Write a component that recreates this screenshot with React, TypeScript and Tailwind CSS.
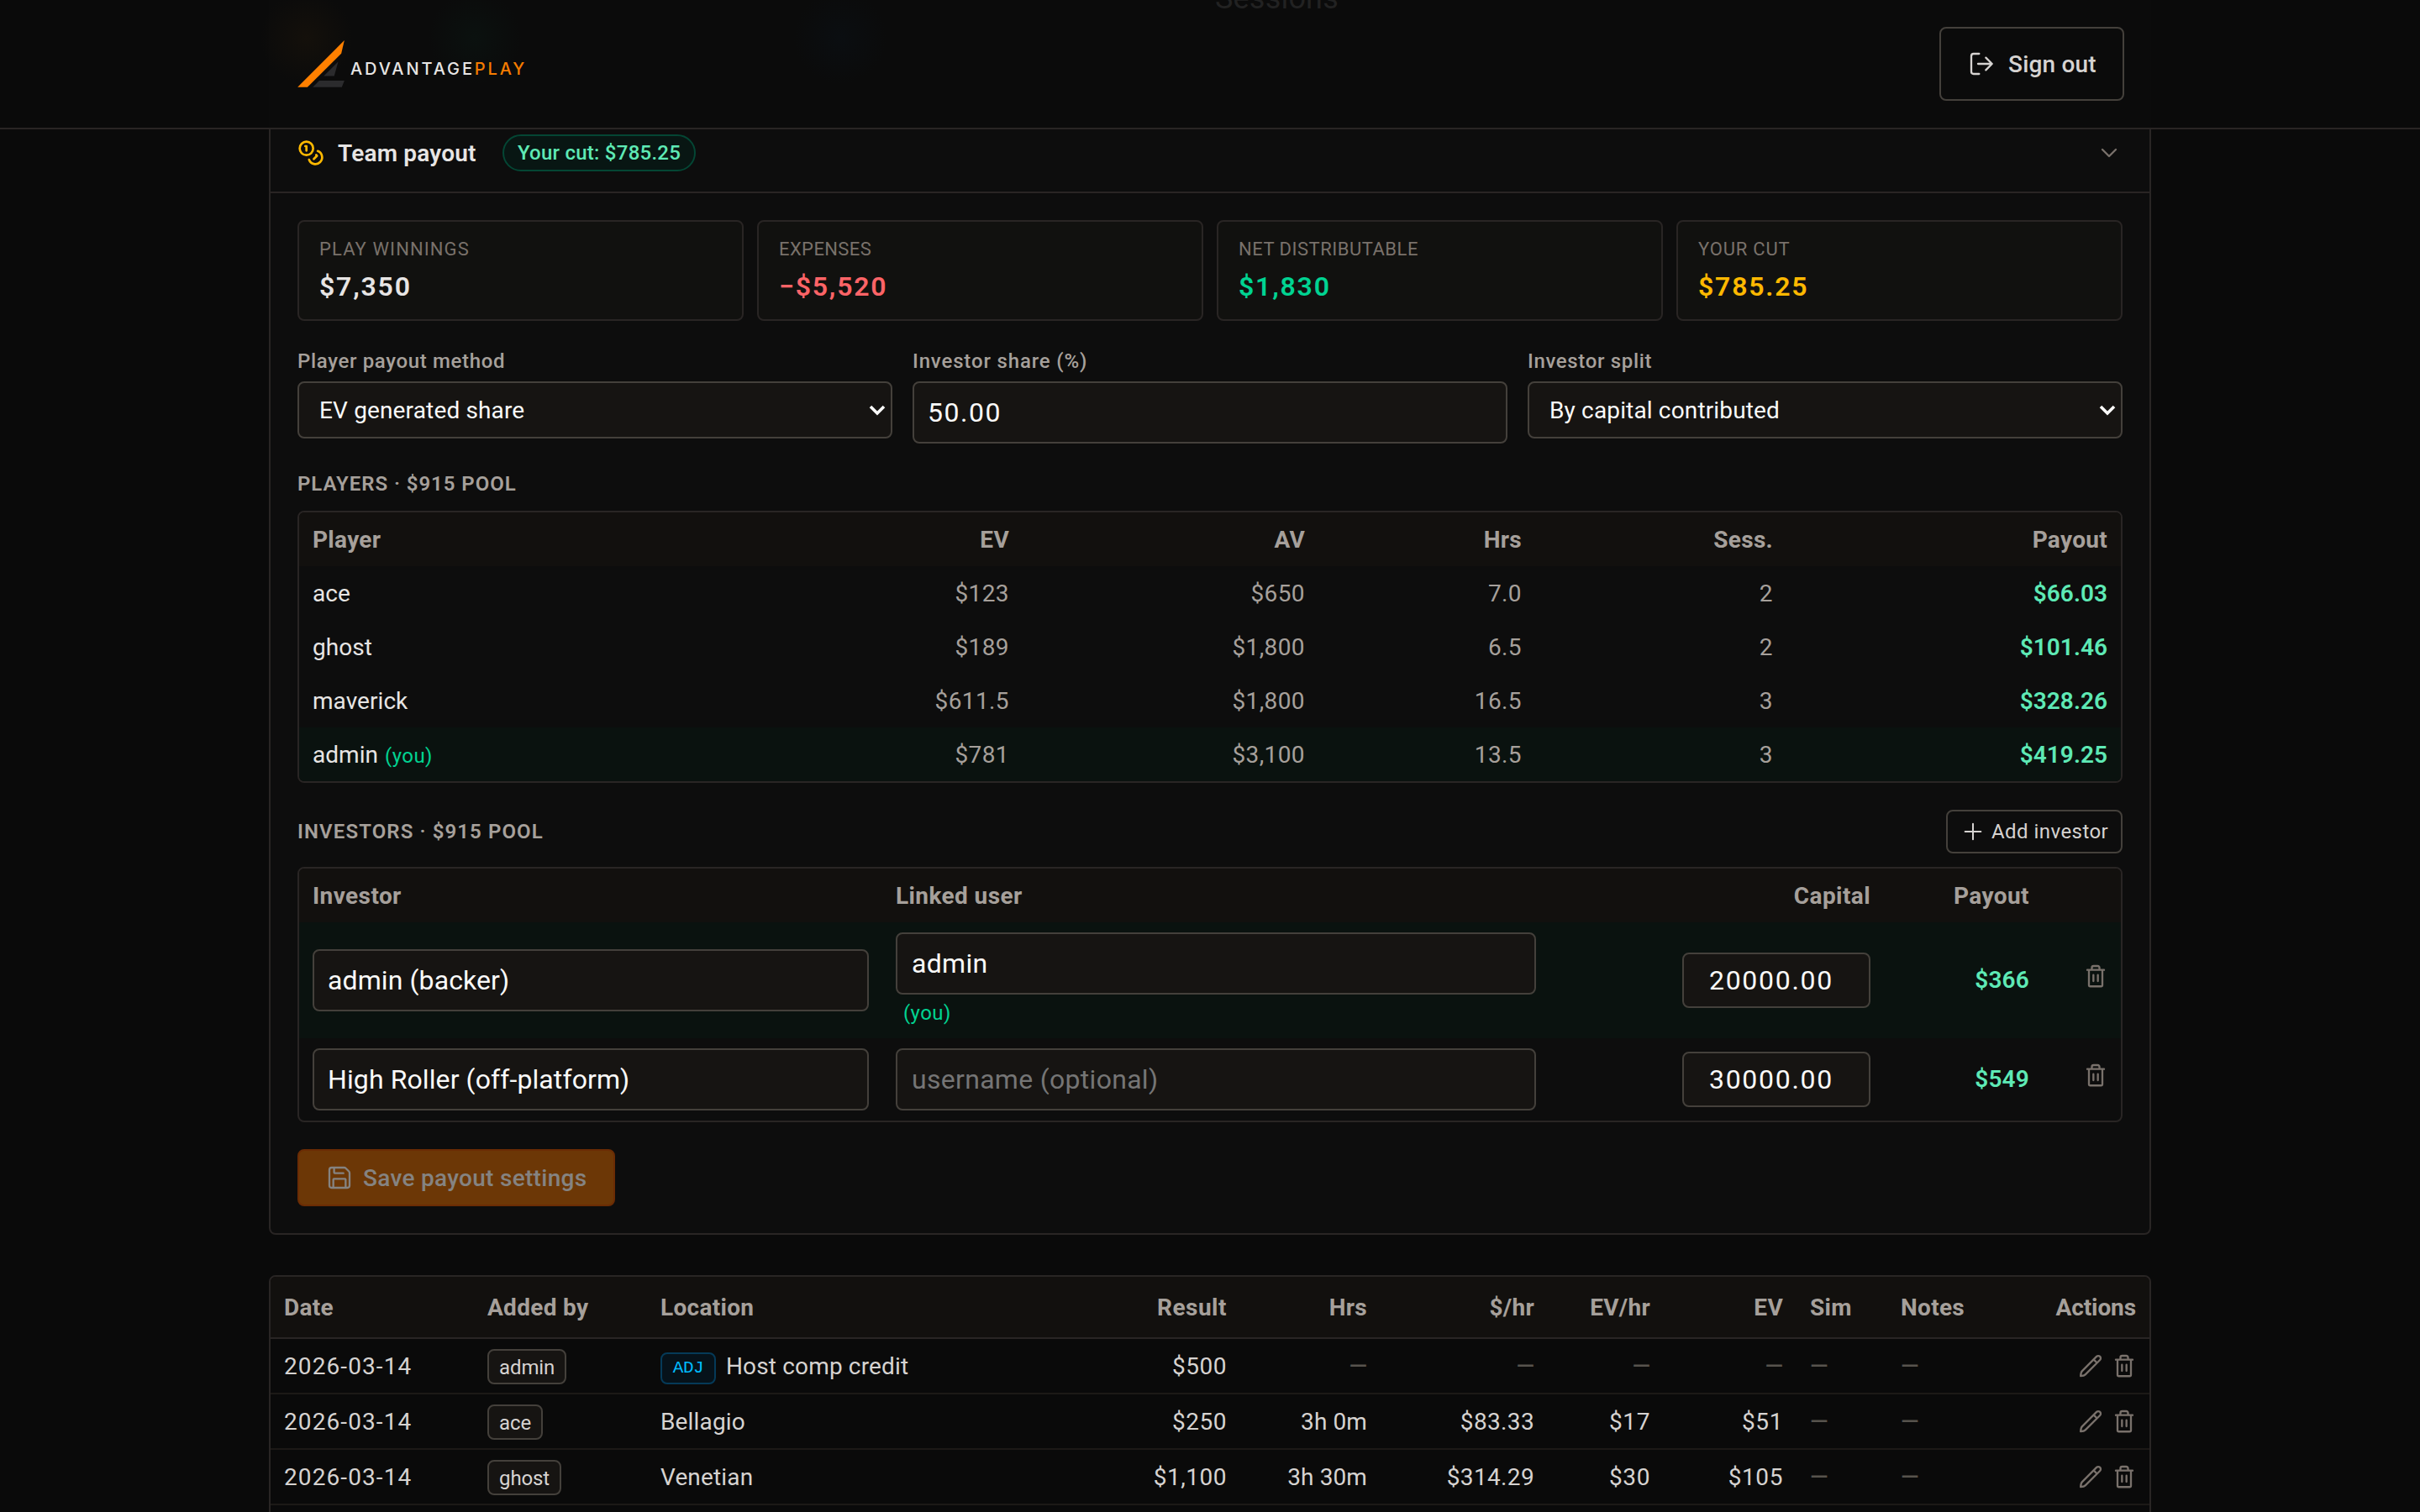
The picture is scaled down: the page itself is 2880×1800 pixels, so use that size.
import React from 'react';

interface IconProps {
  className?: string;
  children: React.ReactNode;
}

const Icon: React.FC<IconProps> = ({ className, children }) => (
  <svg
    viewBox="0 0 24 24"
    fill="none"
    stroke="currentColor"
    strokeWidth={1.75}
    strokeLinecap="round"
    strokeLinejoin="round"
    className={`size-8 shrink-0 ${className ?? ''}`}
  >
    {children}
  </svg>
);

const TrashIcon: React.FC<{ className?: string }> = ({ className }) => (
  <Icon className={className}>
    <path d="M4.500 6.500h15M6 6.500V20a1.200 1.200 0 0 0 1.200 1.200h9.600A1.200 1.200 0 0 0 18 20V6.500M8.600 6.300V4.600A1.600 1.600 0 0 1 10.200 3h3.600a1.600 1.600 0 0 1 1.600 1.600v1.700M10 11v5.500M14 11v5.500" />
  </Icon>
);

const PencilIcon: React.FC = () => (
  <Icon>
    <path d="M17.300 3.700a2.150 2.150 0 0 1 3.050 3.050L7.300 19.800c-.8.8-2.700 1.200-4.200 1.300.1-1.500.4-3.500 1.200-4.300L17.300 3.700zM14.700 6.300l3.050 3.050" />
  </Icon>
);

const stats = [
  { label: 'Play winnings', labelClass: 'tracking-[1.1px]', value: '$7,350', color: 'text-stone-200' },
  { label: 'Expenses', labelClass: 'tracking-[0.4px]', value: '−$5,520', color: 'text-red-400' },
  { label: 'Net distributable', labelClass: 'tracking-[0.5px]', value: '$1,830', color: 'text-emerald-400' },
  { label: 'Your cut', labelClass: 'tracking-[0.8px]', value: '$785.25', color: 'text-amber-400' },
];

const players = [
  { name: 'ace', ev: '$123', av: '$650', hrs: '7.0', sess: '2', payout: '$66.03', you: false },
  { name: 'ghost', ev: '$189', av: '$1,800', hrs: '6.5', sess: '2', payout: '$101.46', you: false },
  { name: 'maverick', ev: '$611.5', av: '$1,800', hrs: '16.5', sess: '3', payout: '$328.26', you: false },
  { name: 'admin', ev: '$781', av: '$3,100', hrs: '13.5', sess: '3', payout: '$419.25', you: true },
];

const investors = [
  { name: 'admin (backer)', user: 'admin', capital: '20000.00', payout: '$366', you: true },
  { name: 'High Roller (off-platform)', user: '', capital: '30000.00', payout: '$549', you: false },
];

const sessions = [
  { by: 'admin', location: 'Host comp credit', adj: true, result: '$500', hrs: '', perHr: '', evHr: '', ev: '' },
  { by: 'ace', location: 'Bellagio', adj: false, result: '$250', hrs: '3h 0m', perHr: '$83.33', evHr: '$17', ev: '$51' },
  { by: 'ghost', location: 'Venetian', adj: false, result: '$1,100', hrs: '3h 30m', perHr: '$314.29', evHr: '$30', ev: '$105' },
];

const fieldClass =
  'block w-full rounded-[8px] border-2 border-stone-700 bg-[#161412] text-stone-50 outline-none placeholder:text-[#757575]';

const Header: React.FC = () => (
  <header className="relative h-[154px] shrink-0 overflow-hidden border-b-2 border-stone-800 bg-[#0a0a0a]">
    <div className="absolute left-[320px] top-0 h-full w-[2240px] bg-[#0b0b0b]" />
    <div className="absolute left-[300px] top-[-20px] size-[130px] bg-[radial-gradient(circle,#14100b_0%,transparent_60%)]" />
    <div className="absolute left-[500px] top-[-20px] size-[130px] bg-[radial-gradient(circle,#0b110f_0%,transparent_60%)]" />
    <div className="absolute left-[935px] top-[-20px] size-[130px] bg-[radial-gradient(circle,#0b0e11_0%,transparent_60%)]" />
    <div className="absolute left-[1446px] top-[-27px] text-[36px] leading-[50px] tracking-[0.2px] text-[#222222]">
      Sessions
    </div>
    <div className="relative mx-auto flex h-[152px] w-[2176px] items-center justify-between">
      <div className="flex items-end gap-[7px] pl-[2px]">
        <svg viewBox="43 55 166 167" className="h-[56px] w-[56px]">
          <path d="M43 221 209 55 198 102 78 221z" fill="#ff8000" />
          <path d="M187 131 173 182H136zM120 198h89l-9 23H97z" fill="#2b2b2d" />
        </svg>
        <div className="mb-[10px] font-['Inter',sans-serif] text-[20px] font-medium leading-6 tracking-[2.9px] text-stone-200">
          ADVANTAGE<span className="text-[#f57c00]">PLAY</span>
        </div>
      </div>
      <button className="flex h-[88px] w-[220px] items-center gap-4 rounded-[8px] border-2 border-stone-700 px-8 text-[28px] font-medium tracking-[0.2px] text-stone-300">
        <Icon>
          <path d="M10 3H5a2 2 0 0 0-2 2v14a2 2 0 0 0 2 2h5M9 12h12.500M16 6.500l5.500 5.500-5.500 5.500" />
        </Icon>
        <span className="whitespace-nowrap pt-[2px]">Sign out</span>
      </button>
    </div>
  </header>
);

const Select: React.FC<{ value: string }> = ({ value }) => (
  <div className="flex h-[68px] items-center justify-between rounded-[8px] border-2 border-stone-700 bg-[#161412] pl-6 pr-[6px] text-[28px] tracking-[0.15px] text-stone-50">
    <span className="pt-[2px]">{value}</span>
    <svg viewBox="0 0 20 14" className="h-[14px] w-5" fill="none" stroke="currentColor" strokeWidth={3.6}>
      <path d="M2 3l8 8 8-8" />
    </svg>
  </div>
);

const Settings: React.FC = () => (
  <div className="mt-8 grid grid-cols-3 gap-6">
    <div>
      <label className="mb-2 block text-[24px] font-medium leading-8 tracking-[0.65px] text-stone-400">Player payout method</label>
      <Select value="EV generated share" />
    </div>
    <div>
      <label className="mb-2 block text-[24px] font-medium leading-8 tracking-[0.85px] text-stone-400">Investor share (%)</label>
      <input className={`${fieldClass} h-[74px] px-4 text-[32px] tracking-[1.5px]`} defaultValue="50.00" />
    </div>
    <div>
      <label className="mb-2 block text-[24px] font-medium leading-8 tracking-[0.65px] text-stone-400">Investor split</label>
      <Select value="By capital contributed" />
    </div>
  </div>
);

const PlayersTable: React.FC = () => (
  <div className="mt-4 overflow-hidden rounded-[8px] border-2 border-stone-800">
    <table className="w-full table-fixed text-[28px] leading-9 [&_td]:h-16 [&_td]:px-4 [&_td]:pb-0 [&_td]:pt-[2px] [&_th]:h-16 [&_th]:px-4 [&_th]:pb-0 [&_th]:pt-[2px]">
      <colgroup>
        <col className="w-[645px]" />
        <col className="w-[216px]" />
        <col className="w-[352px]" />
        <col className="w-[258px]" />
        <col className="w-[299px]" />
        <col className="w-[398px]" />
      </colgroup>
      <thead className="bg-[#12100e] text-right font-semibold tracking-[0.3px] text-stone-400">
        <tr>
          <th className="text-left">Player</th>
          <th>EV</th>
          <th>AV</th>
          <th>Hrs</th>
          <th>Sess.</th>
          <th>Payout</th>
        </tr>
      </thead>
      <tbody className="text-right tracking-[0.4px] text-stone-400">
        {players.map((p) => (
          <tr key={p.name} className={p.you ? 'bg-[#0a120f]' : ''}>
            <td className="text-left tracking-[0.05px] text-stone-200">
              {p.name}
              {p.you && <span className="ml-2 text-[24px] tracking-[0.4px] text-emerald-400">(you)</span>}
            </td>
            <td>{p.ev}</td>
            <td>{p.av}</td>
            <td>{p.hrs}</td>
            <td>{p.sess}</td>
            <td className="font-semibold tracking-[0.05px] text-emerald-300">{p.payout}</td>
          </tr>
        ))}
      </tbody>
    </table>
  </div>
);

const InvestorsTable: React.FC = () => (
  <div className="mt-4 overflow-hidden rounded-[8px] border-2 border-stone-800">
    <table className="w-full table-fixed text-[28px] leading-9 [&_td]:px-4 [&_td]:py-3 [&_th]:h-16 [&_th]:px-4 [&_th]:pb-0 [&_th]:pt-[2px]">
      <colgroup>
        <col className="w-[694px]" />
        <col className="w-[794px]" />
        <col className="w-[398px]" />
        <col className="w-[189px]" />
        <col className="w-[93px]" />
      </colgroup>
      <thead className="bg-[#12100e] text-left font-semibold tracking-[0.4px] text-stone-400">
        <tr>
          <th>Investor</th>
          <th>Linked user</th>
          <th className="text-right">Capital</th>
          <th className="text-right">Payout</th>
          <th />
        </tr>
      </thead>
      <tbody>
        {investors.map((inv) => (
          <tr key={inv.name} className={inv.you ? 'h-[138px] bg-[#0a120f]' : 'h-[98px]'}>
            <td>
              <input className={`${fieldClass} h-[74px] px-4 text-[32px] tracking-[0.1px]`} defaultValue={inv.name} />
            </td>
            <td>
              <input
                className={`${fieldClass} h-[74px] px-[17px] text-[32px] tracking-[0.3px]`}
                defaultValue={inv.user}
                placeholder="username (optional)"
              />
              {inv.you && <div className="mb-[2px] mt-[6px] pl-[9px] text-[24px] leading-8 tracking-[0.4px] text-emerald-400">(you)</div>}
            </td>
            <td>
              <input
                className={`${fieldClass} ml-auto h-[66px] !w-[224px] pl-[30px] pr-2 text-[32px] tracking-[1.7px]`}
                defaultValue={inv.capital}
              />
            </td>
            <td className="text-right font-semibold tracking-[0.2px] text-emerald-300">{inv.payout}</td>
            <td>
              <TrashIcon className="-mr-0.5 mb-[10px] ml-auto text-stone-500" />
            </td>
          </tr>
        ))}
      </tbody>
    </table>
  </div>
);

const TeamPayout: React.FC = () => (
  <section className="rounded-b-[8px] border-2 border-t-0 border-stone-800 bg-[#0d0d0d]">
    <div className="flex h-[76px] items-start justify-between border-b-2 border-stone-800 px-8 pt-[6px]">
      <div className="flex h-11 items-center">
        <Icon className="text-amber-400 [stroke-width:2]">
          <circle cx="8" cy="8" r="6" />
          <path d="M18.090 10.370A6 6 0 1 1 10.340 18M7 6h1v4M16.710 13.880l.7.710-2.820 2.820" />
        </Icon>
        <h2 className="ml-4 w-[164px] whitespace-nowrap pt-px text-[28px] font-semibold tracking-[0.2px] text-stone-200">Team payout</h2>
        <span className="ml-8 flex h-11 w-[230px] items-center justify-center whitespace-nowrap rounded-full border-2 border-[#044634] bg-[#081613] text-[24px] font-medium tracking-[0.25px] text-emerald-300">
          Your cut: $785.25
        </span>
      </div>
      <Icon className="mt-[6px] text-stone-500">
        <path d="M6 9l6 6 6-6" />
      </Icon>
    </div>

    <div className="p-8">
      <div className="grid grid-cols-4 gap-4">
        {stats.map((s) => (
          <div key={s.label} className="h-[120px] rounded-[8px] border-2 border-stone-800 bg-[#11110f] px-6 pt-[17px]">
            <div className={`text-[22px] uppercase leading-8 text-stone-500 ${s.labelClass}`}>{s.label}</div>
            <div className={`mt-[8px] text-[32px] font-semibold leading-10 tracking-[1.8px] ${s.color}`}>{s.value}</div>
          </div>
        ))}
      </div>

      <Settings />

      <h3 className="mt-8 text-[24px] font-semibold uppercase leading-8 tracking-[0.95px] text-stone-400">Players · $915 pool</h3>
      <PlayersTable />

      <div className="mt-8 flex h-[52px] items-center justify-between">
        <h3 className="text-[24px] font-semibold uppercase tracking-[1.1px] text-stone-400">Investors · $915 pool</h3>
        <button className="flex h-[52px] w-[210px] items-center whitespace-nowrap rounded-[8px] border-2 border-stone-700 pl-4 text-[24px] tracking-[0.45px] text-stone-300">
          <Icon className="mr-2 !size-7">
            <path d="M12 4v16M4 12h16" />
          </Icon>
          Add investor
        </button>
      </div>
      <InvestorsTable />

      <button className="mt-8 flex h-[68px] w-[378px] items-center whitespace-nowrap rounded-[8px] border-2 border-[#6b2c04] bg-[#6c3706] pl-8 text-[28px] font-medium tracking-[0.3px] text-[#858381]">
        <Icon className="mr-3">
          <path d="M3 19V5a2 2 0 0 1 2-2h11.170a2 2 0 0 1 1.420.590l2.820 2.820A2 2 0 0 1 21 7.830V19a2 2 0 0 1-2 2H5a2 2 0 0 1-2-2zM7.200 3v4.400a.6.6 0 0 0 .6.6H15.500M6.500 21v-7.400a.6.6 0 0 1 .6-.6h9.800a.6.6 0 0 1 .6.6V21" />
        </Icon>
        <span className="pt-[2px]">Save payout settings</span>
      </button>
    </div>
  </section>
);

const Value: React.FC<{ value?: string }> = ({ value }) =>
  value ? <>{value}</> : <span className="font-medium tracking-normal text-stone-600">—</span>;

const SessionsTable: React.FC = () => (
  <section className="mt-12 rounded-[8px] border-2 border-stone-800 pb-8">
    <table className="w-full table-fixed border-separate border-spacing-0 text-[28px] leading-9 [&_td]:h-[66px] [&_td]:border-b-2 [&_td]:border-stone-900 [&_td]:px-4 [&_td]:pb-0 [&_td]:pt-[2px] [&_th]:h-[74px] [&_th]:border-b-2 [&_th]:border-stone-800 [&_th]:bg-[#12100e] [&_th]:px-4 [&_th]:pb-0 [&_th]:pt-[2px]">
      <colgroup>
        <col className="w-[242px]" />
        <col className="w-[206px]" />
        <col className="w-[491px]" />
        <col className="w-[215px]" />
        <col className="w-[167px]" />
        <col className="w-[199px]" />
        <col className="w-[138px]" />
        <col className="w-[158px]" />
        <col className="w-[108px]" />
        <col className="w-[140px]" />
        <col className="w-[172px]" />
      </colgroup>
      <thead className="text-left font-semibold tracking-[0.3px] text-stone-400">
        <tr>
          <th className="rounded-tl-[6px]">Date</th>
          <th>Added by</th>
          <th>Location</th>
          <th className="text-right tracking-[0.5px]">Result</th>
          <th className="text-right">Hrs</th>
          <th className="text-right">$/hr</th>
          <th className="text-right">EV/hr</th>
          <th className="text-right">EV</th>
          <th>Sim</th>
          <th>Notes</th>
          <th className="rounded-tr-[6px] text-right tracking-[-0.1px]">Actions</th>
        </tr>
      </thead>
      <tbody className="text-stone-300">
        {sessions.map((s) => (
          <tr key={s.by}>
            <td className="tracking-[1.1px]">2026-03-14</td>
            <td>
              <span className="inline-flex h-[42px] items-center rounded-[8px] border-2 border-stone-700 bg-[#161412] px-3 pt-[2px] align-middle text-[24px] tracking-[-0.1px]">
                {s.by}
              </span>
            </td>
            <td>
              <div className="flex items-center tracking-[0.15px]">
                {s.adj && (
                  <span className="mr-3 mt-[3px] flex h-[38px] w-[66px] items-center justify-center rounded-[8px] border-2 border-[#053a58] bg-[#06121a] pt-px font-['Liberation_Mono',monospace] text-[21px] tracking-[-0.5px] text-[#00bcff]">
                    ADJ
                  </span>
                )}
                {s.location}
              </div>
            </td>
            <td className="text-right tracking-[0.5px]"><Value value={s.result} /></td>
            <td className="text-right tracking-[0.1px]"><Value value={s.hrs} /></td>
            <td className="text-right tracking-[0.35px]"><Value value={s.perHr} /></td>
            <td className="text-right tracking-[0.6px]"><Value value={s.evHr} /></td>
            <td className="text-right tracking-[0.6px]"><Value value={s.ev} /></td>
            <td><Value /></td>
            <td><Value /></td>
            <td>
              <div className="-mr-0.5 -mt-0.5 flex justify-end gap-2 text-stone-500">
                <PencilIcon />
                <TrashIcon />
              </div>
            </td>
          </tr>
        ))}
      </tbody>
    </table>
  </section>
);

export default function App() {
  return (
    <div className="flex h-[1800px] w-[2880px] flex-col overflow-hidden bg-[#0a0a0a] font-['Roboto',sans-serif]">
      <Header />
      <main className="mx-auto w-[2240px]">
        <TeamPayout />
        <SessionsTable />
      </main>
    </div>
  );
}
